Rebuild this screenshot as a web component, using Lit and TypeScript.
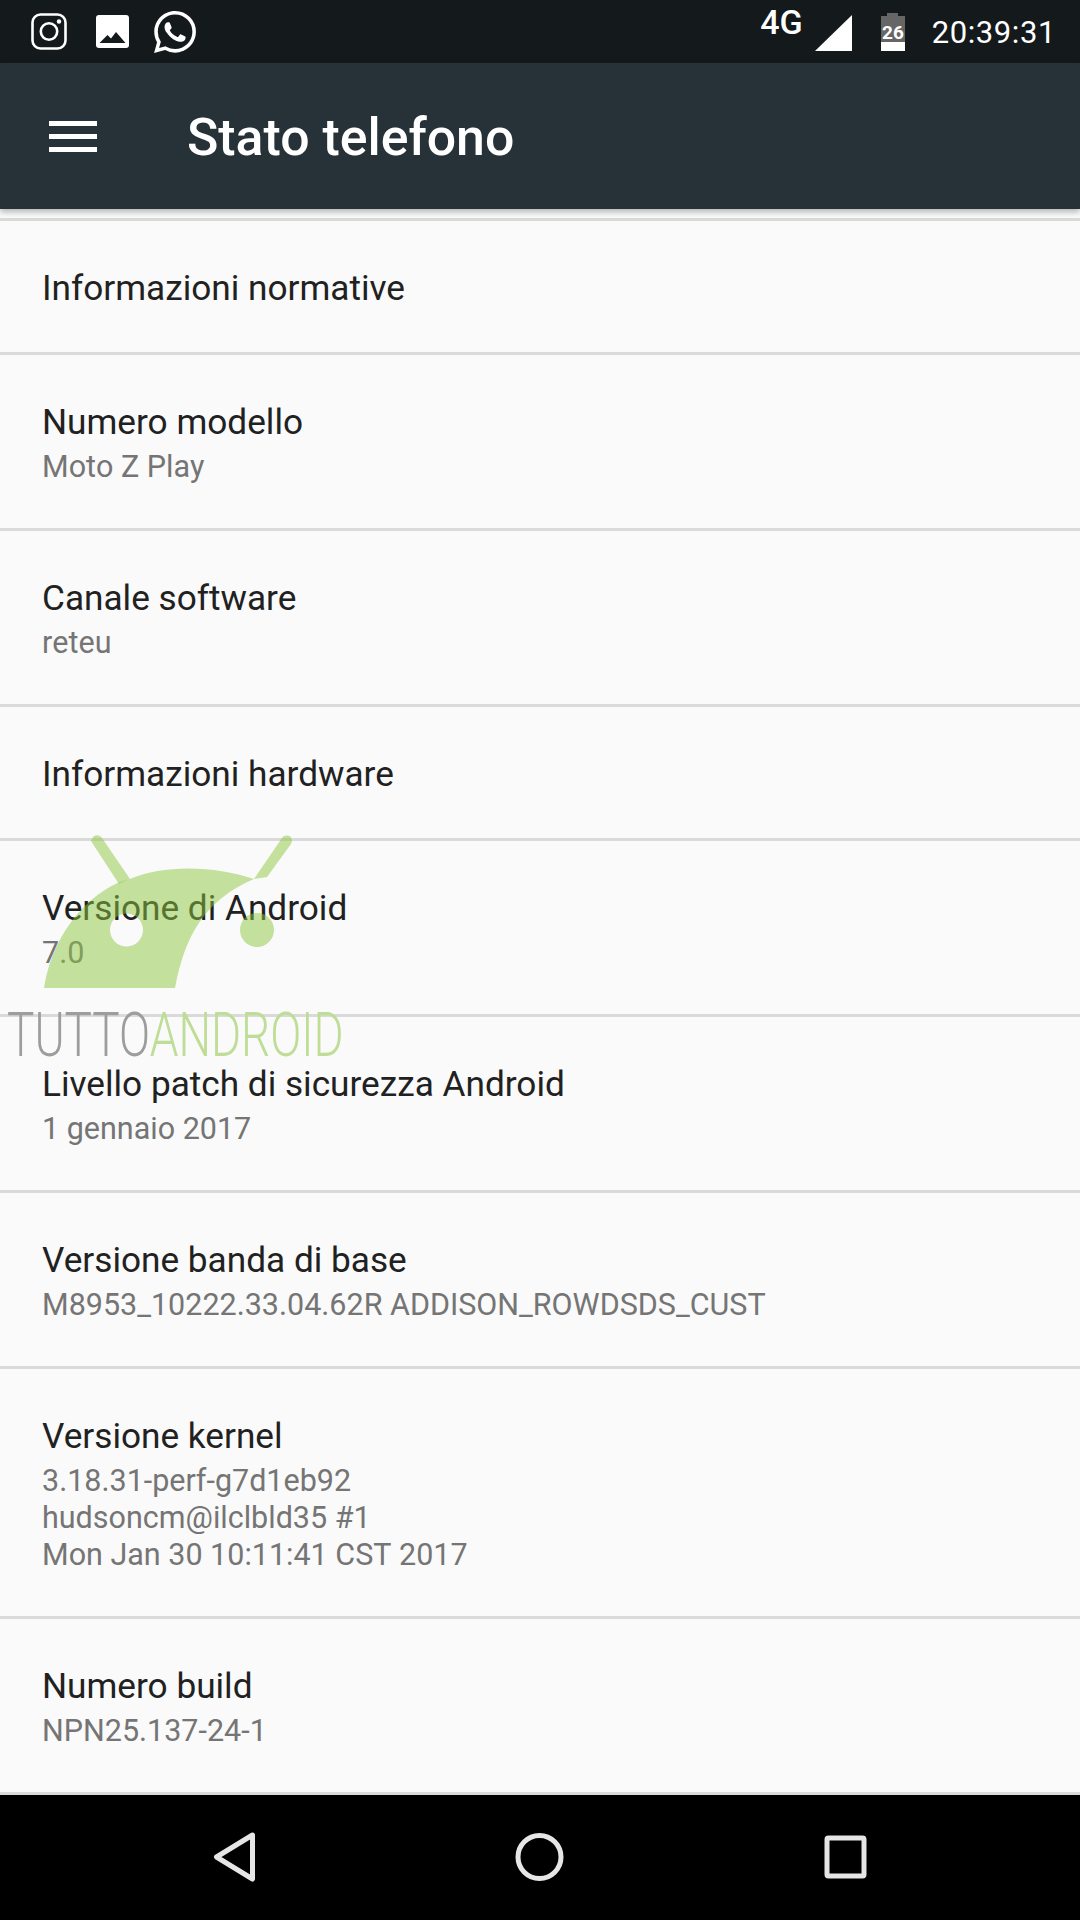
import { LitElement, html, css, svg } from 'lit';
import { customElement } from 'lit/decorators.js';

const rows = [
  { title: 'Informazioni normative', lines: [] },
  { title: 'Numero modello', lines: ['Moto Z Play'] },
  { title: 'Canale software', lines: ['reteu'] },
  { title: 'Informazioni hardware', lines: [] },
  { title: 'Versione di Android', lines: ['7.0'] },
  { title: 'Livello patch di sicurezza Android', lines: ['1 gennaio 2017'] },
  { title: 'Versione banda di base', lines: ['M8953_10222.33.04.62R ADDISON_ROWDSDS_CUST'] },
  { title: 'Versione kernel', lines: ['3.18.31-perf-g7d1eb92', 'hudsoncm@ilclbld35 #1', 'Mon Jan 30 10:11:41 CST 2017'] },
  { title: 'Numero build', lines: ['NPN25.137-24-1'] },
];

const whatsapp =
  'M17.472 14.382c-.297-.149-1.758-.867-2.03-.967-.273-.099-.471-.148-.67.15-.197.297-.767.966-.94 1.164-.173.199-.347.223-.644.075-.297-.15-1.255-.463-2.39-1.475-.883-.788-1.48-1.761-1.653-2.059-.173-.297-.018-.458.13-.606.134-.133.298-.347.446-.52.149-.174.198-.298.298-.497.099-.198.05-.371-.025-.52-.075-.149-.669-1.612-.916-2.207-.242-.579-.487-.5-.669-.51-.173-.008-.371-.01-.57-.01-.198 0-.52.074-.792.372-.272.297-1.04 1.016-1.04 2.479 0 1.462 1.065 2.875 1.213 3.074.149.198 2.096 3.2 5.077 4.487.709.306 1.262.489 1.694.625.712.227 1.36.195 1.871.118.571-.085 1.758-.719 2.006-1.413.248-.694.248-1.289.173-1.413-.074-.124-.272-.198-.57-.347m-5.421 7.403h-.004a9.87 9.87 0 01-5.031-1.378l-.361-.214-3.741.982.998-3.648-.235-.374a9.86 9.86 0 01-1.51-5.26c.001-5.45 4.436-9.884 9.888-9.884 2.64 0 5.122 1.03 6.988 2.898a9.825 9.825 0 012.893 6.994c-.003 5.45-4.437 9.884-9.885 9.884m8.413-18.297A11.815 11.815 0 0012.05 0C5.495 0 .16 5.335.157 11.892c0 2.096.547 4.142 1.588 5.945L.057 24l6.305-1.654a11.882 11.882 0 005.683 1.448h.005c6.554 0 11.89-5.335 11.893-11.893a11.821 11.821 0 00-3.48-8.413Z';

@customElement('app-root')
export class AppRoot extends LitElement {
  static styles = css`
    :host {
      display: block;
      position: relative;
      height: 1920px;
      overflow: hidden;
      font-family: Roboto, sans-serif;
      background: #fafafa;
    }
    .page {
      display: flex;
      flex-direction: column;
      height: 100%;
    }
    .status {
      flex: 0 0 63px;
      display: flex;
      align-items: center;
      background: #14191c;
      color: #fff;
      padding: 0 24px 0 31px;
    }
    .status svg {
      display: block;
      flex: none;
    }
    .spacer {
      flex: 1;
    }
    .net {
      font-size: 34px;
      font-weight: 500;
      line-height: 30px;
      margin: -19px 12px 0 0;
    }
    .time {
      font-size: 31px;
      letter-spacing: 0.6px;
      margin: 1px 0 0 27px;
    }
    .toolbar {
      flex: 0 0 146px;
      display: flex;
      align-items: center;
      background: #273238;
      box-shadow: 0 3px 6px rgba(0, 0, 0, 0.28);
      position: relative;
      z-index: 1;
      padding-left: 49px;
      gap: 90px;
    }
    .title {
      color: #fff;
      font-size: 51.8px;
      font-weight: 500;
      margin-top: 3px;
    }
    .list {
      flex: 1;
      padding-top: 9px;
      overflow: hidden;
    }
    .rule {
      height: 3px;
      background: #dadada;
    }
    .row {
      padding: 45px 42px 41.5px;
      border-bottom: 3px solid #dadada;
    }
    .row-title {
      font-size: 35.2px;
      line-height: 44px;
      color: #212121;
    }
    .row-sub {
      font-size: 30.5px;
      font-kerning: none;
      line-height: 36.67px;
      color: #757575;
      margin-top: 5px;
      padding-bottom: 1.13px;
    }
    .nav {
      flex: 0 0 125px;
      background: #000;
      display: block;
    }
    .mark {
      position: absolute;
      left: 0;
      top: 0;
      pointer-events: none;
    }
    .mark-text {
      position: absolute;
      left: 7px;
      top: 997px;
      font-size: 62px;
      line-height: 76px;
      font-weight: 300;
      white-space: nowrap;
      transform: scaleX(0.74);
      transform-origin: left top;
    }
    .tutto {
      color: #9d9d9d;
    }
    .android {
      color: #bedd96;
    }
  `;

  private statusLeft() {
    return html`
      <svg width="36" height="37" viewBox="0 0 36 37" fill="none" stroke="#fff" stroke-width="2.6">
        <rect x="1.5" y="1.5" width="33" height="34" rx="8" />
        <circle cx="18" cy="18.5" r="8.2" />
        <circle cx="28" cy="8.5" r="2.2" fill="#fff" stroke="none" />
      </svg>
      <svg style="margin-left:29px" width="33" height="33" viewBox="0 0 33 33">
        <rect width="33" height="33" rx="3" fill="#fff" />
        <path d="M3.5 28 L11.5 20 L15 23.5 L20 17 L29.5 28 Z" fill="#14191c" />
      </svg>
      <svg style="margin-left:25px" width="42" height="42" viewBox="0 0 24 24">
        <path fill="#fff" d="${whatsapp}" />
      </svg>
    `;
  }

  private statusRight() {
    return html`
      <span class="net">4G</span>
      <svg width="37" height="36" viewBox="0 0 37 36" style="margin-top:3px">
        <path d="M0 36 L37 0 V36 Z" fill="#fff" />
      </svg>
      <svg style="margin-left:29px" width="24" height="38" viewBox="0 0 24 38">
        <path d="M6 0 H17 V3 H24 V29 H0 V3 H6 Z" fill="#666" />
        <rect y="29" width="24" height="9" fill="#fff" />
        <text x="12" y="26" text-anchor="middle" fill="#fff" font-size="19" font-weight="700" font-family="Roboto">26</text>
      </svg>
      <span class="time">20:39:31</span>
    `;
  }

  private markSvg() {
    return svg`
      <g fill="#8cc63f" fill-opacity="0.5">
        <path fill-rule="evenodd" d="M44 988 C54 925 98 886 130 879 C165 864 215 866 254 879 C205 900 185 935 175 988 Z M143 930 A16.5 16.5 0 1 0 110 930 A16.5 16.5 0 1 0 143 930 Z" />
        <path d="M91 841 C93 834 99 834 102 838 L130 879 C126 880 122 882 119 884 Z" />
        <path d="M254 879 L282 838 C285 834 292 835 292 841 C292 842 291 843 291 844 L267 877 Z" />
        <circle cx="257" cy="930" r="17" />
      </g>
    `;
  }

  render() {
    return html`
      <div class="page">
        <div class="status">${this.statusLeft()}<span class="spacer"></span>${this.statusRight()}</div>
        <div class="toolbar">
          <svg width="48" height="31" viewBox="0 0 48 31" fill="#fff">
            <rect width="48" height="5" />
            <rect y="13" width="48" height="5" />
            <rect y="26" width="48" height="5" />
          </svg>
          <span class="title">Stato telefono</span>
        </div>
        <div class="list">
          <div class="rule"></div>
          ${rows.map(
            (r) => html`
              <div class="row">
                <div class="row-title">${r.title}</div>
                ${r.lines.length ? html`<div class="row-sub">${r.lines.map((l) => html`<div>${l}</div>`)}</div>` : ''}
              </div>
            `,
          )}
        </div>
        <svg class="nav" width="1080" height="125" viewBox="0 0 1080 125" fill="none" stroke="#e6e6e6" stroke-width="5" stroke-linejoin="round">
          <path d="M252.5 40 L216.5 62 L252.5 84 Z" />
          <circle cx="539.5" cy="62" r="21.5" />
          <rect x="827" y="43" width="37" height="38" rx="1.5" />
        </svg>
      </div>
      <svg class="mark" width="1080" height="1100" viewBox="0 0 1080 1100">${this.markSvg()}</svg>
      <div class="mark-text"><span class="tutto">TUTTO</span><span class="android">ANDROID</span></div>
    `;
  }
}
